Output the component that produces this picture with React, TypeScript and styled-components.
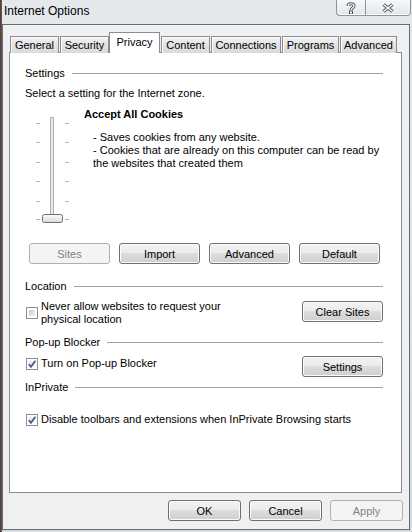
import styled, { createGlobalStyle } from "styled-components";

const GlobalStyle = createGlobalStyle`
  html, body {
    margin: 0;
    padding: 0;
  }
  body {
    font-family: "Liberation Sans", Arial, sans-serif;
    font-size: 11px;
    color: #000;
  }
`;

const Frame = styled.div`
  width: 412px;
  height: 532px;
  box-sizing: border-box;
  display: flex;
  flex-direction: column;
  padding: 0 2px 2px 2px;
  overflow: hidden;
  background: linear-gradient(to right, #4a3c39 0, #6d5a55 2px, transparent 2px),
    linear-gradient(#e6e9ec, #d6dbe0);
`;

const TitleBar = styled.div`
  height: 24px;
  display: flex;
  justify-content: space-between;
  align-items: flex-start;
`;

const Title = styled.div`
  padding-left: 2px;
  font-size: 12px;
  line-height: 22px;
`;

const Captions = styled.div`
  display: flex;
  margin-right: -1px;
`;

const CaptionButton = styled.div<{ $w: number; $side: "left" | "right" }>`
  width: ${(p) => p.$w}px;
  height: 16px;
  box-sizing: border-box;
  display: flex;
  align-items: center;
  justify-content: center;
  border: 1px solid #8d949c;
  border-top: none;
  ${(p) => (p.$side === "left" ? "border-right: none; border-bottom-left-radius: 4px;" : "border-bottom-right-radius: 4px;")}
  background: linear-gradient(#f7f8f9, #e2e6ea);
  box-shadow: inset 0 -1px 0 #fff;
`;

const Client = styled.div`
  flex: 1;
  display: flex;
  flex-direction: column;
  border: 1px solid #646b73;
  background: #f0f0f0;
  padding: 8px 0 0 6px;
`;

const TabStrip = styled.div`
  display: flex;
  align-items: flex-end;
  height: 20px;
  padding-left: 1px;
`;

const Tab = styled.div<{ $w: number; $active?: boolean }>`
  width: ${(p) => p.$w}px;
  box-sizing: border-box;
  height: ${(p) => (p.$active ? 21 : 17)}px;
  display: flex;
  align-items: center;
  justify-content: center;
  border: 1px solid #898c95;
  border-bottom: none;
  margin-left: ${(p) => (p.$active ? 0 : 1)}px;
  padding-bottom: ${(p) => (p.$active ? 2 : 0)}px;
  position: relative;
  z-index: ${(p) => (p.$active ? 1 : 0)};
  background: ${(p) => (p.$active ? "#fff" : "linear-gradient(#f3f3f3, #e3e3e3 50%, #dadada)")};
  box-shadow: ${(p) => (p.$active ? "none" : "inset 1px 1px 0 #fcfcfc")};
  &:first-child {
    margin-left: 0;
  }
`;

const Panel = styled.div`
  margin-top: -1px;
  width: 393px;
  height: 441px;
  box-sizing: border-box;
  border: 1px solid #898c95;
  background: #fff;
  padding: 13px 18px 0 15px;
  display: flex;
  flex-direction: column;
`;

const GroupHeader = styled.div<{ $mt?: number }>`
  display: flex;
  align-items: center;
  gap: 7px;
  line-height: 15px;
  margin-top: ${(p) => p.$mt ?? 0}px;
  &::after {
    content: "";
    flex: 1;
    height: 1px;
    background: #a3a3a3;
  }
`;

const Text = styled.div<{ $mt?: number }>`
  line-height: 15px;
  margin-top: ${(p) => p.$mt ?? 0}px;
`;

const SliderArea = styled.div`
  display: flex;
  margin-top: 6px;
  height: 118px;
`;

const SliderSvg = styled.svg`
  margin-left: 5px;
  flex: none;
`;

const Description = styled.div`
  margin-left: 10px;
`;

const LevelTitle = styled.div`
  font-weight: bold;
  line-height: 15px;
`;

const LevelText = styled.div`
  margin-top: 9px;
  padding-left: 9px;
  line-height: 13px;
`;

const ButtonRow = styled.div`
  display: flex;
  gap: 9px;
  margin-top: 18px;
  padding-left: 4px;
`;

const Button = styled.button<{ $w?: number; $mt?: number }>`
  width: ${(p) => p.$w ?? 81}px;
  height: 21px;
  margin: ${(p) => p.$mt ?? 0}px 0 0 0;
  padding: 0;
  box-sizing: border-box;
  flex: none;
  font: inherit;
  color: #000;
  border: 1px solid #707070;
  border-radius: 3px;
  background: linear-gradient(#f2f2f2 0%, #ebebeb 50%, #dddddd 50%, #cfcfcf 100%);
  box-shadow: inset 0 0 0 1px #fbfbfb;
  &:disabled {
    color: #838383;
    border-color: #adb2b5;
    background: #f4f4f4;
    box-shadow: none;
  }
`;

const OptionRow = styled.div<{ $mt: number }>`
  display: flex;
  justify-content: space-between;
  align-items: flex-start;
  margin-top: ${(p) => p.$mt}px;
`;

const CheckLabel = styled.label<{ $mt?: number }>`
  display: flex;
  align-items: center;
  gap: 3px;
  margin-top: ${(p) => p.$mt ?? 0}px;
  margin-left: 1px;
  line-height: 13px;
`;

const Box = styled.span<{ $checked?: boolean }>`
  width: 12px;
  height: 12px;
  box-sizing: border-box;
  flex: none;
  display: flex;
  align-items: center;
  justify-content: center;
  border: 1px solid #8e8f8f;
  padding: 2px;
  background: ${(p) =>
    p.$checked
      ? "linear-gradient(135deg, #e4e6ea, #fbfbfb) content-box, #fff"
      : "linear-gradient(135deg, #c6cad0, #f2f3f4) content-box, #fff"};
`;

const Footer = styled.div`
  display: flex;
  justify-content: flex-end;
  gap: 8px;
  margin-top: 7px;
  padding-right: 6px;
`;

const Checkbox = ({ checked }: { checked?: boolean }) => (
  <Box $checked={checked}>
    {checked && (
      <svg width="10" height="10" viewBox="0 0 10 10" style={{ margin: -2 }}>
        <path d="M1.8 5.2 L4 7.8 L8.4 1.8" fill="none" stroke="#4a5f8e" strokeWidth="1.9" />
      </svg>
    )}
  </Box>
);

const tabs = [
  { label: "General", w: 49 },
  { label: "Security", w: 49 },
  { label: "Privacy", w: 51, active: true },
  { label: "Content", w: 49 },
  { label: "Connections", w: 70 },
  { label: "Programs", w: 57 },
  { label: "Advanced", w: 57 },
];

const tickYs = [16, 35, 55, 74, 94, 112];

const Slider = () => (
  <SliderSvg width="44" height="118" viewBox="0 0 44 118">
    <defs>
      <linearGradient id="thumb" x1="0" y1="0" x2="0" y2="1">
        <stop offset="0" stopColor="#fdfdfd" />
        <stop offset="1" stopColor="#d8d8d8" />
      </linearGradient>
    </defs>
    <rect x="20.5" y="10.5" width="3" height="100" fill="#e8e8e8" stroke="#b2b2b2" />
    {tickYs.map((y) => (
      <g key={y} fill="#b9b9b9">
        <rect x="6" y={y} width="4" height="1" />
        <rect x="35" y={y} width="4" height="1" />
      </g>
    ))}
    <rect x="12.5" y="107.5" width="20" height="8" rx="2" fill="url(#thumb)" stroke="#6f6f6f" />
  </SliderSvg>
);

export default function App() {
  return (
    <Frame>
      <GlobalStyle />
      <TitleBar>
        <Title>Internet Options</Title>
        <Captions>
          <CaptionButton $w={29} $side="left">
            <svg width="10" height="12" viewBox="0 0 10 12">
              <path d="M2 4 C2 1, 8 1, 8 4 C8 6, 5 6, 5 8" fill="none" stroke="#4d535a" strokeWidth="3" />
              <path d="M2 4 C2 1, 8 1, 8 4 C8 6, 5 6, 5 8" fill="none" stroke="#fff" strokeWidth="1.2" />
              <rect x="3.5" y="9" width="3" height="3" fill="#fff" stroke="#4d535a" />
            </svg>
          </CaptionButton>
          <CaptionButton $w={46} $side="right">
            <svg width="12" height="10" viewBox="0 0 12 10">
              <path d="M1.5 1.5 L10.5 8.5 M10.5 1.5 L1.5 8.5" fill="none" stroke="#4d535a" strokeWidth="3.4" />
              <path d="M1.5 1.5 L10.5 8.5 M10.5 1.5 L1.5 8.5" fill="none" stroke="#fff" strokeWidth="1.4" />
            </svg>
          </CaptionButton>
        </Captions>
      </TitleBar>
      <Client>
        <TabStrip>
          {tabs.map((t) => (
            <Tab key={t.label} $w={t.w} $active={t.active}>
              {t.label}
            </Tab>
          ))}
        </TabStrip>
        <Panel>
          <GroupHeader>Settings</GroupHeader>
          <Text $mt={5}>Select a setting for the Internet zone.</Text>
          <SliderArea>
            <Slider />
            <Description>
              <LevelTitle>Accept All Cookies</LevelTitle>
              <LevelText>
                <div>- Saves cookies from any website.</div>
                <div>- Cookies that are already on this computer can be read by</div>
                <div>the websites that created them</div>
              </LevelText>
            </Description>
          </SliderArea>
          <ButtonRow>
            <Button disabled>Sites</Button>
            <Button>Import</Button>
            <Button>Advanced</Button>
            <Button>Default</Button>
          </ButtonRow>

          <GroupHeader $mt={15}>Location</GroupHeader>
          <OptionRow $mt={6}>
            <CheckLabel>
              <Checkbox />
              <span>
                Never allow websites to request your
                <br />
                physical location
              </span>
            </CheckLabel>
            <Button $mt={1}>Clear Sites</Button>
          </OptionRow>

          <GroupHeader $mt={9}>Pop-up Blocker</GroupHeader>
          <OptionRow $mt={6}>
            <CheckLabel $mt={1}>
              <Checkbox checked />
              <span>Turn on Pop-up Blocker</span>
            </CheckLabel>
            <Button>Settings</Button>
          </OptionRow>

          <GroupHeader $mt={3}>InPrivate</GroupHeader>
          <OptionRow $mt={18}>
            <CheckLabel>
              <Checkbox checked />
              <span>Disable toolbars and extensions when InPrivate Browsing starts</span>
            </CheckLabel>
          </OptionRow>
        </Panel>
        <Footer>
          <Button $w={73}>OK</Button>
          <Button $w={73}>Cancel</Button>
          <Button $w={73} disabled>
            Apply
          </Button>
        </Footer>
      </Client>
    </Frame>
  );
}
